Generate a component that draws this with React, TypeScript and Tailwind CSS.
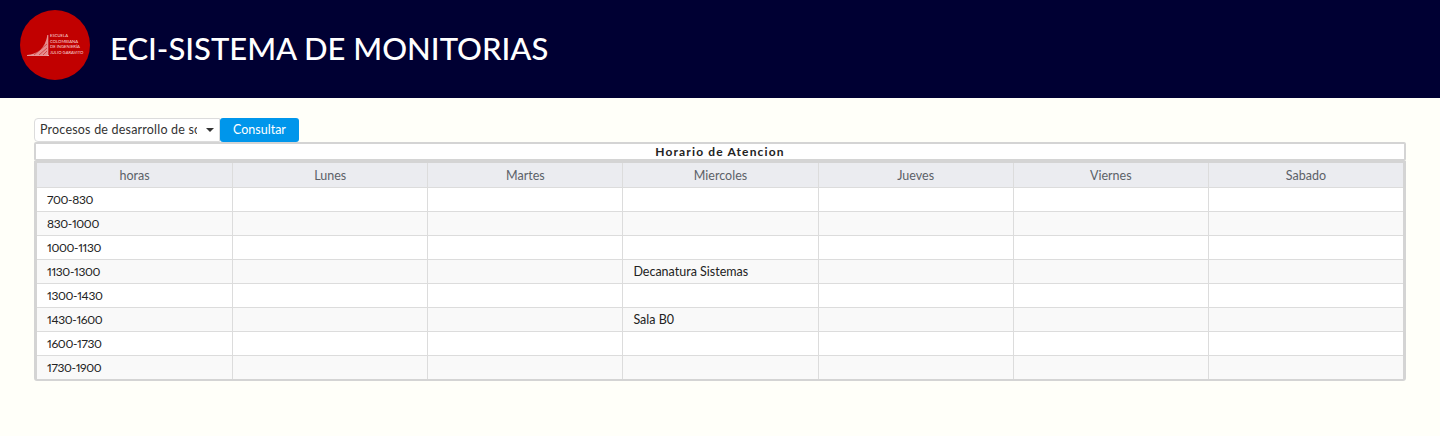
const days = ["Lunes", "Martes", "Miercoles", "Jueves", "Viernes", "Sabado"];

const rows: { hora: string; miercoles?: string }[] = [
  { hora: "700-830" },
  { hora: "830-1000" },
  { hora: "1000-1130" },
  { hora: "1130-1300", miercoles: "Decanatura Sistemas" },
  { hora: "1300-1430" },
  { hora: "1430-1600", miercoles: "Sala B0" },
  { hora: "1600-1730" },
  { hora: "1730-1900" },
];

function Logo() {
  return (
    <div className="relative mt-[10px] h-[70px] w-[70px] shrink-0 self-start rounded-full bg-[#c10000]">
      <svg className="absolute left-0 top-0" width="70" height="70" viewBox="0 0 70 70">
        <path d="M7 45 C17 44 25 39 27.500 25 V45 Z" fill="#f3c9c9" opacity="0.7" />
        <path d="M7 45.500 H29 M27.800 25 V45.500" stroke="#fff" strokeWidth="0.6" fill="none" />
        <path d="M14 45 L27 34 M19 45 L27 38 M23 45 L27 41" stroke="#c10000" strokeWidth="0.5" fill="none" />
      </svg>
      <div className="absolute left-[30px] top-[23px] flex flex-col text-[4.200px] leading-[5.700px] text-[#f8dcdc] whitespace-nowrap">
        <span>ESCUELA</span>
        <span>COLOMBIANA</span>
        <span>DE INGENIERÍA</span>
        <span>JULIO GARAVITO</span>
      </div>
    </div>
  );
}

export default function App() {
  return (
    <div className="min-h-[436px] bg-[#fffff9] font-['Lato',sans-serif] text-[#212529]">
      <header className="flex h-[98px] items-center gap-5 bg-[#000033] pl-5">
        <Logo />
        <h1 className="pb-px text-[31px] font-medium leading-none text-white">ECI-SISTEMA DE MONITORIAS</h1>
      </header>

      <main className="px-[34px] pt-5">
        <div className="flex h-[24px]">
          <div className="relative w-[186px]">
            <select className="block h-[24px] w-full appearance-none rounded-l-[4px] border border-[#dcdcdc] bg-white pl-[5px] pr-[22px] text-[12.500px] tracking-[0.2px] text-[#333]">
              <option>Procesos de desarrollo de software</option>
            </select>
            {/* flechita del select */}
            <span className="pointer-events-none absolute right-[6px] top-[10px] h-0 w-0 border-x-[4px] border-t-[4px] border-x-transparent border-t-[#333]" />
          </div>
          <button className="w-[79px] rounded-[3px] bg-[#0096eb] text-[12.500px] text-white">Consultar</button>
        </div>

        <div className="flex h-[19px] items-center justify-center rounded-[2px] border-2 border-[#d4d4d4] bg-white text-[12px] font-bold tracking-[1.150px] text-[#222]">
          Horario de Atencion
        </div>

        <div className="overflow-hidden rounded-b-[3px] border-x-[3px] border-b-2 border-t-2 border-[#d4d4d4]">
          <table className="w-full table-fixed border-separate border-spacing-0 text-[12.500px]">
            <thead>
              <tr className="h-[25px] bg-[#ebecf0] text-[#5c6168]">
                <th className="border-b border-[#dcdcdc] pt-[2px] font-normal">horas</th>
                {days.map((d) => (
                  <th key={d} className="border-b border-l border-[#dcdcdc] pt-[2px] font-normal">
                    {d}
                  </th>
                ))}
              </tr>
            </thead>
            <tbody>
              {rows.map((r) => (
                <tr key={r.hora} className="h-[24px] odd:bg-white even:bg-[#f9f9f9] last:h-[23px] [&:last-child>td]:border-b-0">
                  <td className="border-b border-[#dcdcdc] pl-[10px] pt-px text-[12px] tracking-[-0.35px] text-[#222] proportional-nums">
                    {r.hora}
                  </td>
                  {days.map((d) => (
                    <td key={d} className="border-b border-l border-[#dcdcdc] pl-[10px] pt-[2px] text-[#222]">
                      {d === "Miercoles" ? r.miercoles : null}
                    </td>
                  ))}
                </tr>
              ))}
            </tbody>
          </table>
        </div>
      </main>
    </div>
  );
}
